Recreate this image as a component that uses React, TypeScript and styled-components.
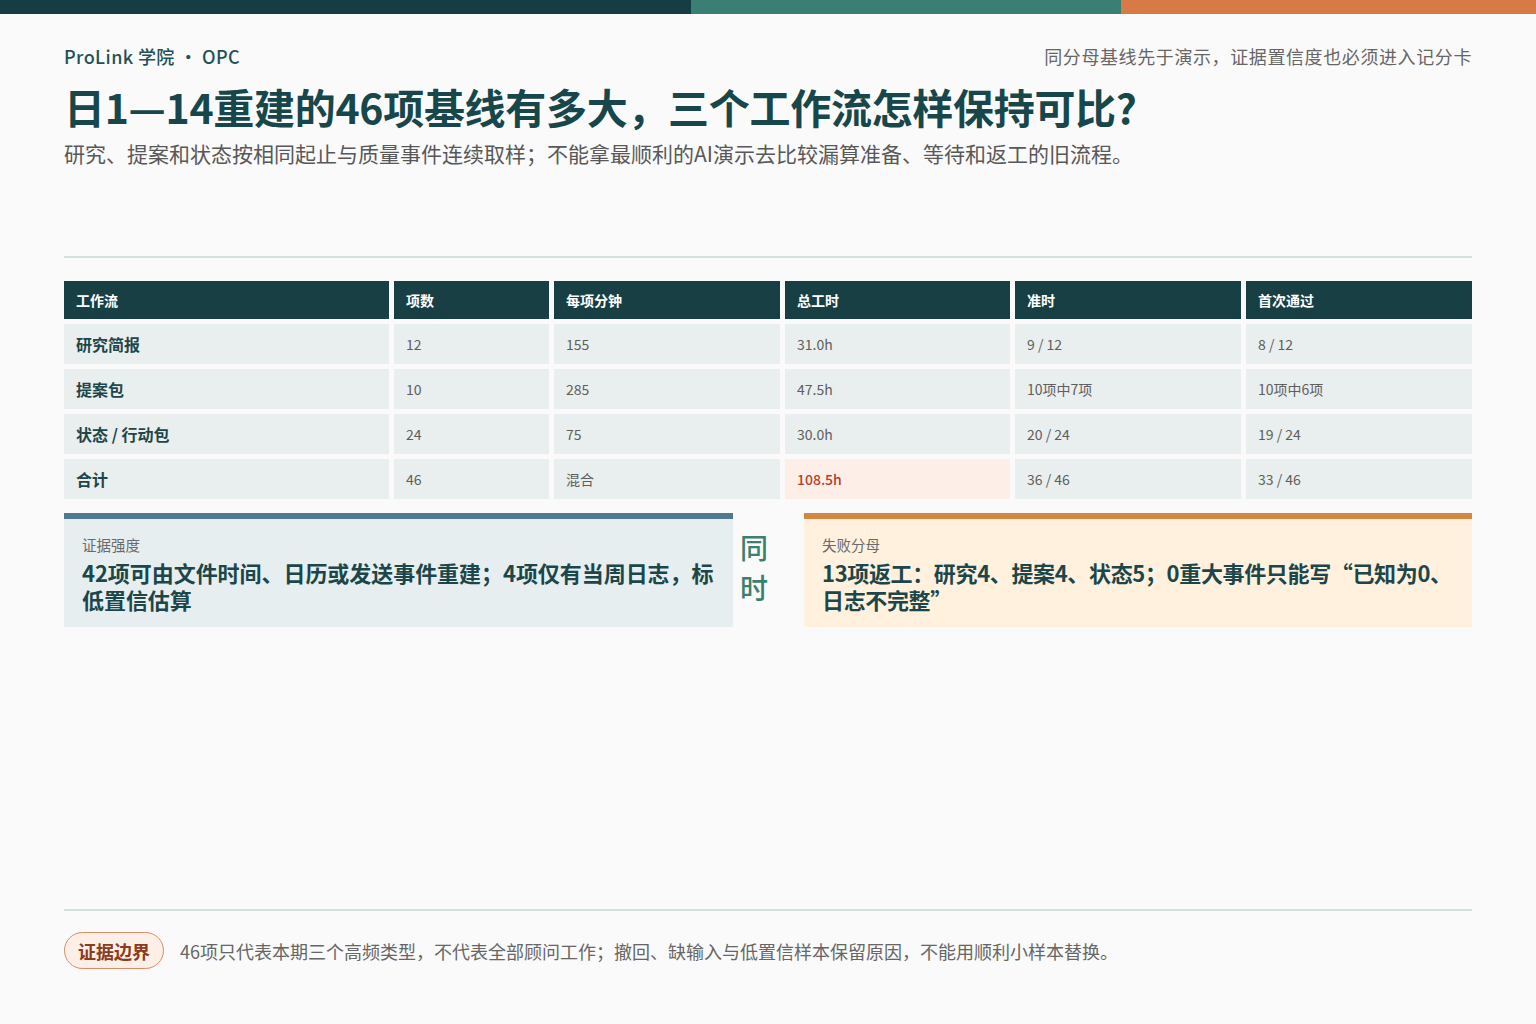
import React from "react";
import styled, { createGlobalStyle } from "styled-components";

const Global = createGlobalStyle`
  html, body { margin: 0; padding: 0; background: #fafafa; }
  body { font-family: "Noto Sans CJK SC", "Noto Sans", sans-serif; }
  * { box-sizing: border-box; }
`;

const Page = styled.div`
  height: 1024px;
  display: flex;
  flex-direction: column;
  background: #fafafa;
`;

const TopBar = styled.div`
  display: grid;
  grid-template-columns: 691px 430px 1fr;
  height: 14px;
`;

const BarSeg = styled.div<{ $c: string }>`
  background: ${(p) => p.$c};
`;

const Body = styled.div`
  flex: 1;
  display: flex;
  flex-direction: column;
  padding: 30px 64px 55px;
`;

const HeaderRow = styled.div`
  display: flex;
  justify-content: space-between;
  align-items: center;
  height: 24px;
`;

const Brand = styled.div`
  font-size: 18px;
  font-weight: 500;
  color: #1f5156;
  letter-spacing: 0.4px;
`;

const Tagline = styled.div`
  font-size: 18px;
  color: #666;
  letter-spacing: 0.6px;
`;

const Title = styled.h1`
  margin: 12px 0 0;
  font-size: 41px;
  line-height: 52px;
  font-weight: 700;
  color: #17464b;
  letter-spacing: -0.3px;
`;

const Subtitle = styled.p`
  margin: 7px 0 0;
  font-size: 21px;
  line-height: 28px;
  color: #585858;
`;

const Divider = styled.div<{ $mt: number }>`
  margin-top: ${(p) => p.$mt}px;
  height: 2px;
  background: #d5dfdf;
`;

const Table = styled.div`
  margin-top: 23px;
  display: grid;
  grid-template-columns: 325px 155px 226px 225px 226px 226px;
  grid-template-rows: 38px repeat(4, 40px);
  gap: 5px;
`;

const HeadCell = styled.div`
  background: #173f44;
  color: #fff;
  font-size: 14px;
  font-weight: 700;
  display: flex;
  align-items: center;
  padding-left: 12px;
`;

const Cell = styled.div<{ $first?: boolean; $hot?: boolean }>`
  background: ${(p) => (p.$hot ? "#fdefe8" : "#e9eeee")};
  color: ${(p) => (p.$hot ? "#b3402b" : p.$first ? "#1d464a" : "#5e5e5e")};
  font-size: ${(p) => (p.$first ? "16px" : "14px")};
  font-weight: ${(p) => (p.$first ? 700 : p.$hot ? 500 : 400)};
  display: flex;
  align-items: center;
  padding-left: 12px;
`;

const Cards = styled.div`
  margin-top: 14px;
  display: grid;
  grid-template-columns: 669px 71px 1fr;
`;

const Card = styled.div<{ $bar: string; $bg: string }>`
  background: ${(p) => p.$bg};
  border-top: 6px solid ${(p) => p.$bar};
  padding: 16px 16px 14px 18px;
`;

const CardLabel = styled.div`
  font-size: 14.5px;
  line-height: 20px;
  color: #6a6a6a;
`;

const CardText = styled.div<{ $tight?: boolean }>`
  margin-top: 4px;
  font-size: 22px;
  line-height: 27px;
  font-weight: 700;
  color: #1c4649;
  letter-spacing: ${(p) => (p.$tight ? "-0.35px" : "-0.05px")};
`;

const Joiner = styled.div`
  padding: 14px 0 0 7px;
  font-size: 28px;
  line-height: 40px;
  font-weight: 500;
  color: #3a8070;
  width: 40px;
  display: flex;
  flex-direction: column;
`;

const Footer = styled.div`
  margin-top: auto;
  display: flex;
  flex-direction: column;
`;

const FootRow = styled.div`
  margin-top: 21px;
  display: flex;
  align-items: center;
  gap: 16px;
`;

const Badge = styled.span`
  height: 37px;
  width: 100px;
  border: 1px solid #d98c68;
  background: #fdefe6;
  border-radius: 19px;
  color: #8b3b20;
  font-size: 18px;
  font-weight: 700;
  display: flex;
  align-items: center;
  justify-content: center;
`;

const FootText = styled.span`
  font-size: 18px;
  color: #666;
`;

const headers = ["工作流", "项数", "每项分钟", "总工时", "准时", "首次通过"];
const rows: string[][] = [
  ["研究简报", "12", "155", "31.0h", "9 / 12", "8 / 12"],
  ["提案包", "10", "285", "47.5h", "10项中7项", "10项中6项"],
  ["状态 / 行动包", "24", "75", "30.0h", "20 / 24", "19 / 24"],
  ["合计", "46", "混合", "108.5h", "36 / 46", "33 / 46"],
];

export default function App() {
  return (
    <Page>
      <Global />
      <TopBar>
        <BarSeg $c="#143e43" />
        <BarSeg $c="#3a7e74" />
        <BarSeg $c="#d67b45" />
      </TopBar>
      <Body>
        <HeaderRow>
          <Brand>ProLink 学院 · OPC</Brand>
          <Tagline>同分母基线先于演示，证据置信度也必须进入记分卡</Tagline>
        </HeaderRow>
        <Title>日1—14重建的46项基线有多大，三个工作流怎样保持可比?</Title>
        <Subtitle>
          研究、提案和状态按相同起止与质量事件连续取样；不能拿最顺利的AI演示去比较漏算准备、等待和返工的旧流程。
        </Subtitle>
        <Divider $mt={89} />
        <Table>
          {headers.map((h) => (
            <HeadCell key={h}>{h}</HeadCell>
          ))}
          {rows.map((r, ri) =>
            r.map((c, ci) => (
              <Cell
                key={`${ri}-${ci}`}
                $first={ci === 0}
                $hot={ri === 3 && ci === 3}
              >
                {c}
              </Cell>
            ))
          )}
        </Table>
        <Cards>
          <Card $bar="#4f7a8f" $bg="#e6eef0">
            <CardLabel>证据强度</CardLabel>
            <CardText>
              42项可由文件时间、日历或发送事件重建；4项仅有当周日志，标低置信估算
            </CardText>
          </Card>
          <Joiner>
            <span>同</span>
            <span>时</span>
          </Joiner>
          <Card $bar="#d4883f" $bg="#fff1de">
            <CardLabel>失败分母</CardLabel>
            <CardText $tight>
              13项返工：研究4、提案4、状态5；0重大事件只能写“已知为0、日志不完整”
            </CardText>
          </Card>
        </Cards>
        <Footer>
          <Divider $mt={0} />
          <FootRow>
            <Badge>证据边界</Badge>
            <FootText>
              46项只代表本期三个高频类型，不代表全部顾问工作；撤回、缺输入与低置信样本保留原因，不能用顺利小样本替换。
            </FootText>
          </FootRow>
        </Footer>
      </Body>
    </Page>
  );
}
